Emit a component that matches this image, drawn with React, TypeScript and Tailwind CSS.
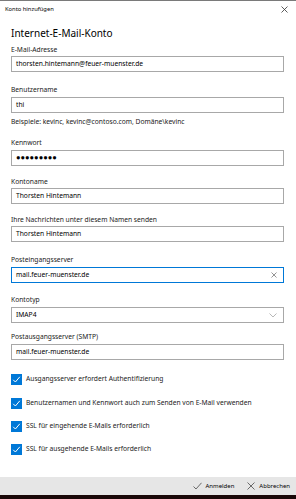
import React from "react";

const font = { fontFamily: '"Noto Sans", "Open Sans", sans-serif' };

function Label({ children, mt }: { children: React.ReactNode; mt: string }) {
  return <div className={`${mt} h-[10px] text-[6.7px] leading-[10px] text-[#1a1a1a] whitespace-nowrap`}>{children}</div>;
}

function Input({ value, mt, h = "h-[16px]", focused = false, right, valueClass = "text-[6.7px]" }: { value: string; mt: string; h?: string; focused?: boolean; right?: React.ReactNode; valueClass?: string }) {
  return (
    <div
      className={`${mt} ${h} w-[273px] flex items-center pl-[4px] pr-[6px] border ${
        focused ? "border-[#0078d7]" : "border-[#a8a8a8]"
      } bg-white text-black`}
    >
      <span className={`flex-1 whitespace-nowrap ${valueClass}`}>{value}</span>
      {right}
    </div>
  );
}

function Check({ label, mt }: { label: string; mt: string }) {
  return (
    <div className={`${mt} flex items-center h-[11px]`}>
      <div className="w-[11px] h-[11px] bg-[#0078d7] flex items-center justify-center">
        <svg width="9" height="9" viewBox="0 0 9 9">
          <path d="M1.2 4.8 L3.4 7 L7.8 1.8" fill="none" stroke="white" strokeWidth="1" />
        </svg>
      </div>
      <span className="ml-[4px] text-[6.7px] text-[#1a1a1a] whitespace-nowrap">{label}</span>
    </div>
  );
}

export default function App() {
  return (
    <div className="w-[296px] h-[499px] flex flex-col bg-white overflow-hidden" style={font}>
      <div className="h-[1px] bg-[#7a7a7a]" />
      <div className="h-[17px] flex items-center justify-between pl-[5px] pr-[8px]">
        <span className="text-[5.8px] text-black">Konto hinzufügen</span>
        <svg width="7" height="7" viewBox="0 0 7 7">
          <path d="M0.5 0.5 L6.5 6.5 M6.5 0.5 L0.5 6.5" stroke="#333" strokeWidth="0.8" />
        </svg>
      </div>
      <div className="flex flex-col px-[11px]">
        <div className="mt-[8px] h-[14px] text-[10px] leading-[14px] text-black">Internet-E-Mail-Konto</div>
        <Label mt="mt-[5px]">E-Mail-Adresse</Label>
        <Input mt="mt-[1px]" value="thorsten.hintemann@feuer-muenster.de" />
        <Label mt="mt-[13px]">Benutzername</Label>
        <Input mt="mt-[2px]" value="thi" />
        <div className="mt-[4px] h-[10px] text-[6.7px] leading-[10px] text-[#1a1a1a] whitespace-nowrap">
          Beispiele: kevinc, kevinc@contoso.com, Domäne\kevinc
        </div>
        <Label mt="mt-[11px]">Kennwort</Label>
        <Input mt="mt-[2px]" value="●●●●●●●●●" valueClass="text-[7.5px]" />
        <Label mt="mt-[11px]">Kontoname</Label>
        <Input mt="mt-[1px]" value="Thorsten Hintemann" />
        <Label mt="mt-[11px]">Ihre Nachrichten unter diesem Namen senden</Label>
        <Input mt="mt-[1px]" value="Thorsten Hintemann" />
        <Label mt="mt-[13px]">Posteingangsserver</Label>
        <Input
          mt="mt-[2px]"
          focused
          value="mail.feuer-muenster.de"
          right={
            <svg width="6" height="6" viewBox="0 0 6 6">
              <path d="M0.5 0.5 L5.5 5.5 M5.5 0.5 L0.5 5.5" stroke="#666" strokeWidth="0.7" />
            </svg>
          }
        />
        <Label mt="mt-[12px]">Kontotyp</Label>
        <Input
          mt="mt-[2px]"
          value="IMAP4"
          right={
            <svg width="8" height="5" viewBox="0 0 8 5">
              <path d="M0.5 0.5 L4 4 L7.5 0.5" fill="none" stroke="#999" strokeWidth="0.7" />
            </svg>
          }
        />
        <Label mt="mt-[9px]">Postausgangsserver (SMTP)</Label>
        <Input mt="mt-[2px]" value="mail.feuer-muenster.de" />
        <Check mt="mt-[14px]" label="Ausgangsserver erfordert Authentifizierung" />
        <Check mt="mt-[13px]" label="Benutzernamen und Kennwort auch zum Senden von E-Mail verwenden" />
        <Check mt="mt-[12px]" label="SSL für eingehende E-Mails erforderlich" />
        <Check mt="mt-[12px]" label="SSL für ausgehende E-Mails erforderlich" />
      </div>
      <div className="flex-1" />
      <div className="h-[18px] bg-[#e6e6e6] flex items-center justify-end pr-[6px] text-[6px] text-black">
        <svg width="9" height="8" viewBox="0 0 9 8" className="mr-[3px]">
          <path d="M0.5 4.5 L3 7 L8.5 0.8" fill="none" stroke="#333" strokeWidth="0.7" />
        </svg>
        <span>Anmelden</span>
        <svg width="8" height="8" viewBox="0 0 8 8" className="ml-[13px] mr-[4px]">
          <path d="M0.5 0.5 L7.5 7.5 M7.5 0.5 L0.5 7.5" stroke="#333" strokeWidth="0.7" />
        </svg>
        <span>Abbrechen</span>
      </div>
      <div className="h-[4px] bg-[#1a0808]" />
    </div>
  );
}
